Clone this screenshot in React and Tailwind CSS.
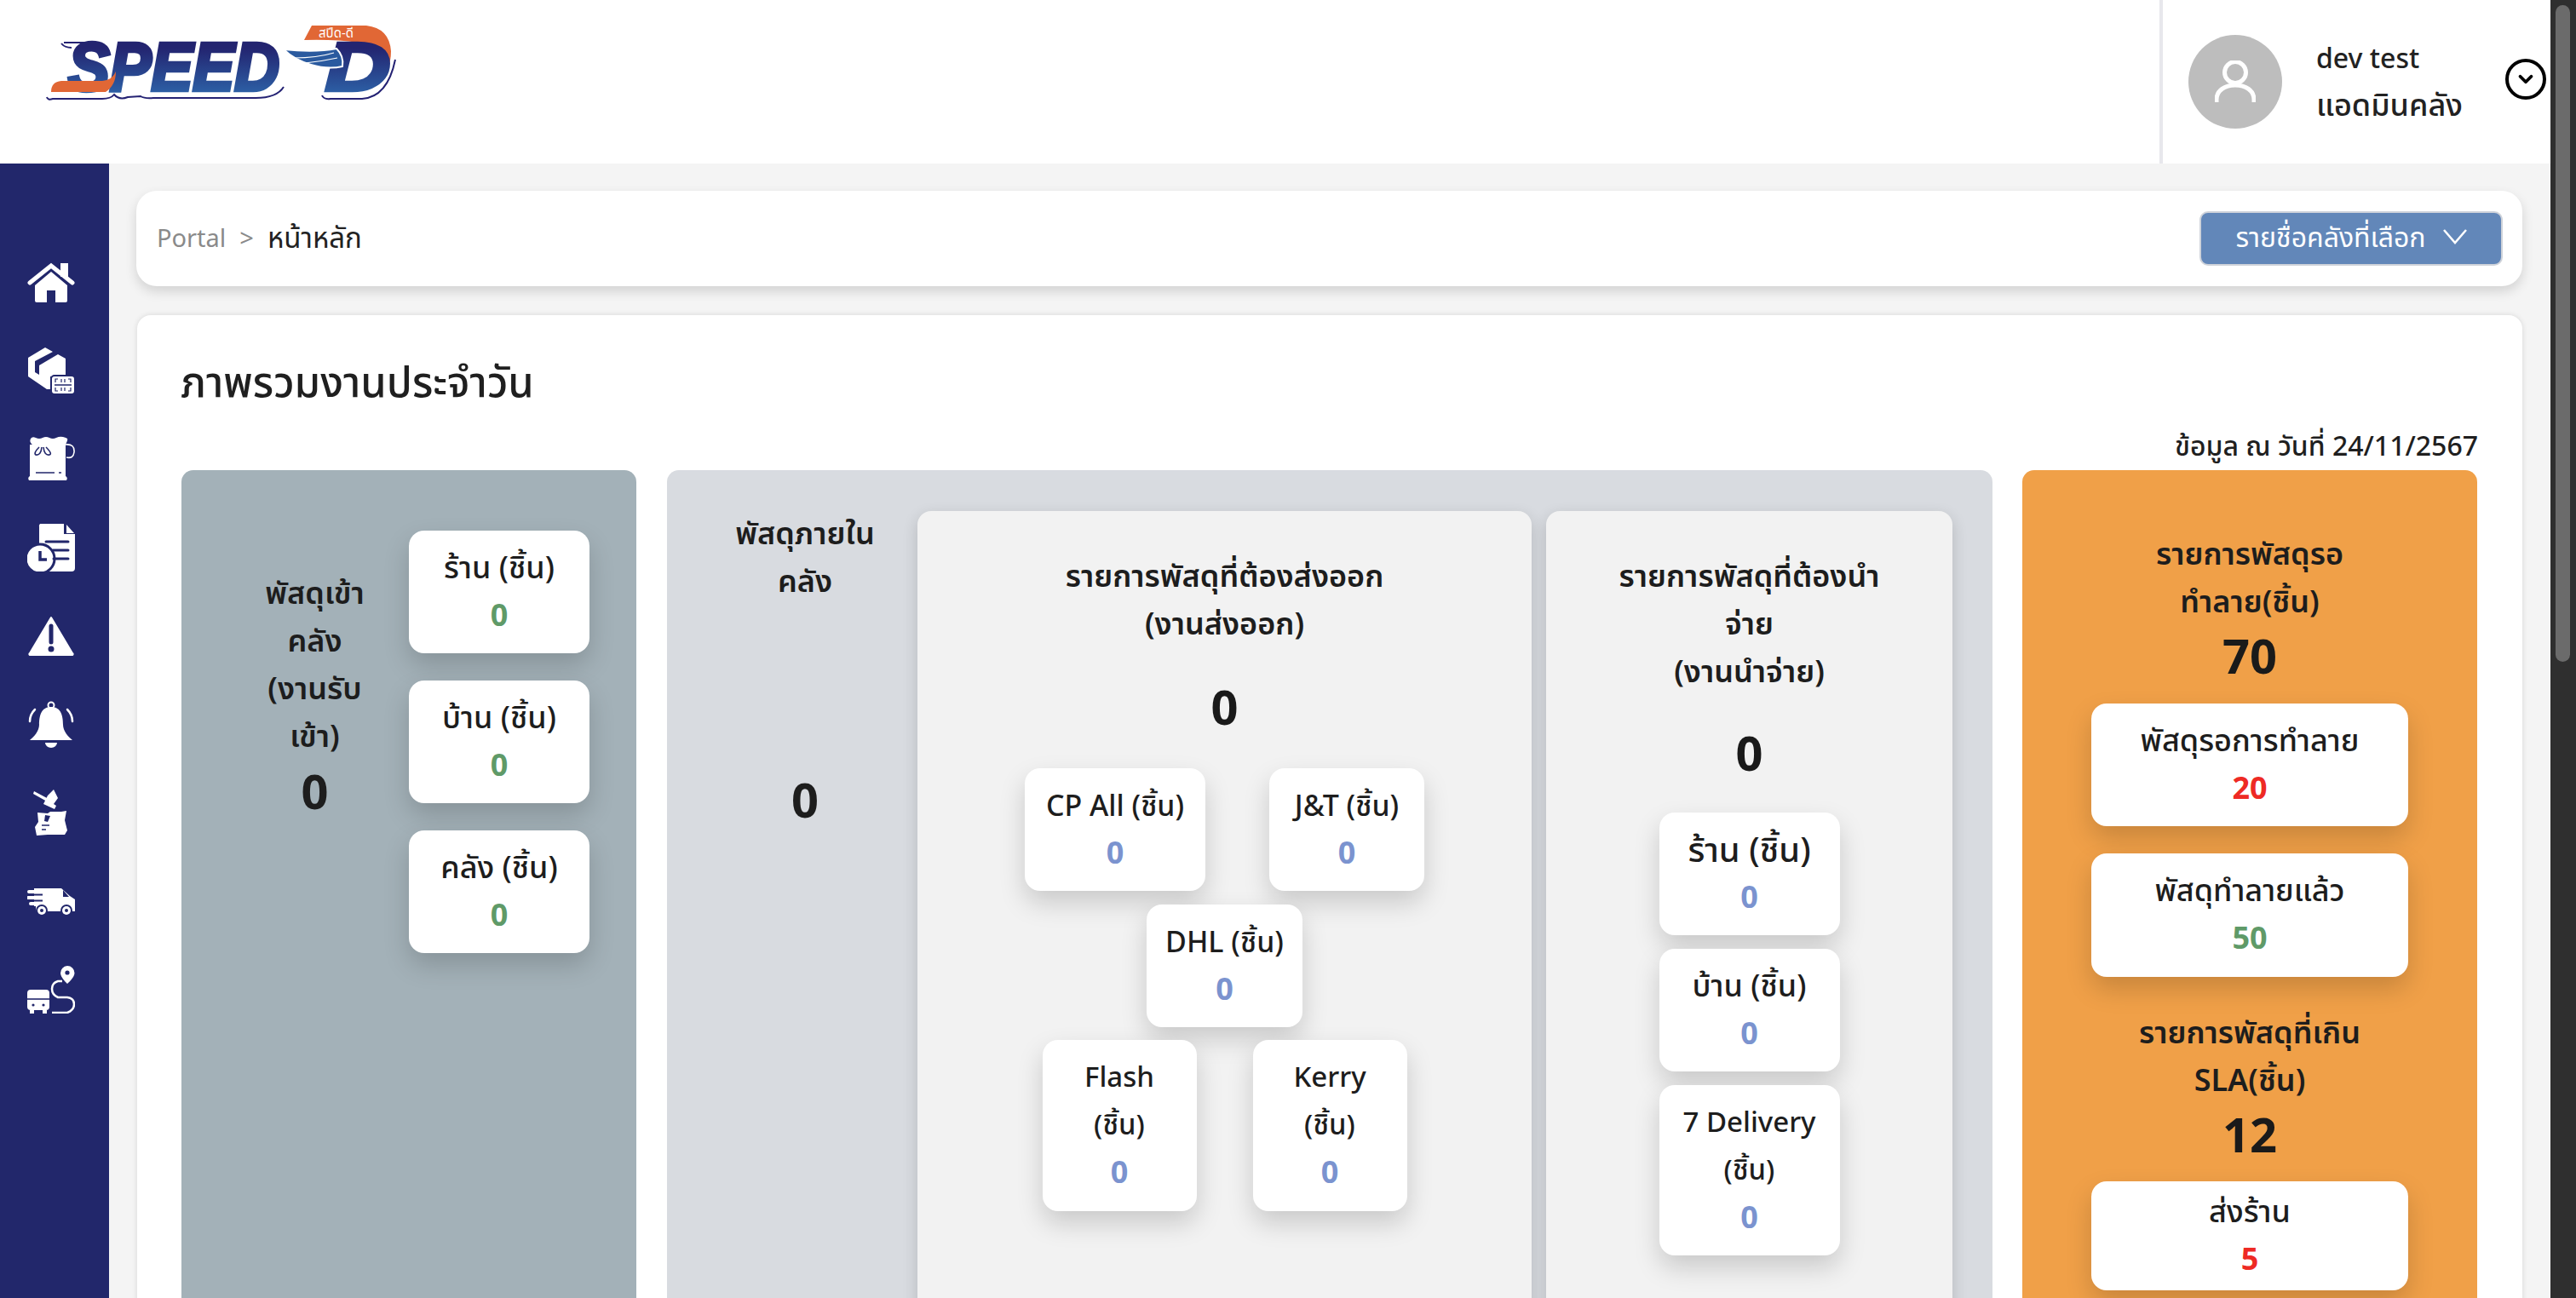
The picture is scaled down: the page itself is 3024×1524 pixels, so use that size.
import React from 'react';
import { ChevronDown } from 'lucide-react';

const thaiFont = "font-['Noto_Sans','Noto_Sans_Thai','Noto_Sans_CJK_SC',sans-serif]";

// กล่องตัวเลขสีขาว
const StatCard = ({ label, value, color, className = '', labelClass = 'text-[36px]' }) => (
    <div className={`bg-white rounded-[18px] shadow-[0_14px_30px_rgba(0,0,0,0.17)] text-center flex flex-col justify-center pb-[3px] ${className}`}>
        <div className={`leading-[56px] text-[#1d1d1d] font-medium ${labelClass}`}>{label}</div>
        <div className={`text-[36px] leading-[56px] font-bold ${color}`}>{value}</div>
    </div>
);

const HomeIcon = () => (
    <svg width="56" height="56" viewBox="0 0 56 56" fill="white">
        <rect x="39" y="5" width="9" height="16" />
        <path d="M28 15 47 31V49a2 2 0 0 1-2 2H33V37H23V51H11a2 2 0 0 1-2-2V31Z" />
        <path d="M3 28 28 8 53 28" fill="none" stroke="white" strokeWidth="5" strokeLinecap="round" />
    </svg>
);

const BoxScanIcon = () => (
    <svg width="56" height="56" viewBox="0 0 56 56" fill="white">
        <path d="M21 0 30 5 9 16V29L14 32V21L36 8 45 13V34H27V49H23L1 34V12Z" strokeLinejoin="round" />
        <rect x="28" y="33" width="28" height="22" rx="4" stroke="#22276b" strokeWidth="2" />
        <path d="M32 44H52" stroke="#22276b" strokeWidth="1.5" />
        <path d="M33 41V37H36M40 41V37M44 41V37M51 41V37H48M33 47V51H36M40 47V51M44 47V51M51 47V51H48" fill="none" stroke="#22276b" strokeWidth="1.2" />
    </svg>
);

const SackIcon = () => (
    <svg width="56" height="56" viewBox="0 0 56 56" fill="white">
        <path d="M4 4q2-3 6-1t8 0 8 0 8 0 8-1 5 2-2 7H6Q2 8 4 4Z" />
        <path d="M3 11H45V48q3 2 1 5H2q-2-3 1-5Z" />
        <path d="M14 14Q7 21 10 23 16 24 17 14M22 14Q30 22 26 23 20 24 19 14" fill="none" stroke="#22276b" strokeWidth="1.6" />
        <path d="M10 44H32M37 44H40" stroke="#22276b" strokeWidth="1.6" />
        <path d="M45 11Q56 10 55 20 54 28 46 26" fill="none" stroke="white" strokeWidth="1.6" />
    </svg>
);

const DocClockIcon = () => (
    <svg width="56" height="56" viewBox="0 0 56 56" fill="white">
        <path d="M15 0H43V12H56V52a4 4 0 0 1-4 4H18a4 4 0 0 1-4-4V4a4 4 0 0 1 1-4Z" />
        <path d="M46 1 55 11H46Z" />
        <circle cx="15" cy="41" r="17" stroke="#22276b" strokeWidth="3" />
        <path d="M15 32V42H23" fill="none" stroke="#22276b" strokeWidth="3.5" />
        <path d="M22 21H48M30 31H48M31 41H48" stroke="#22276b" strokeWidth="3" strokeLinecap="round" />
    </svg>
);

const WarnIcon = () => (
    <svg width="56" height="56" viewBox="0 0 56 56" fill="white">
        <path d="M28 6 53 48a1 1 0 0 1-1 2H4a1 1 0 0 1-1-2Z" stroke="white" strokeWidth="2" strokeLinejoin="round" />
        <path d="M28 16V35" stroke="#22276b" strokeWidth="5" strokeLinecap="round" />
        <circle cx="28" cy="43" r="3.5" fill="#22276b" />
    </svg>
);

const BellIcon = () => (
    <svg width="56" height="56" viewBox="0 0 56 56" fill="white">
        <circle cx="28" cy="5" r="3.5" fill="none" stroke="white" strokeWidth="2" />
        <path d="M28 7C16 7 14 18 14 28 14 35 8 42 3 46H53C48 42 42 35 42 28 42 18 40 7 28 7Z" />
        <path d="M21 49A7 6 0 0 0 35 49Z" />
        <path d="M9 10Q3 16 3 24M47 10Q53 16 53 24" fill="none" stroke="white" strokeWidth="2.5" strokeLinecap="round" />
    </svg>
);

const HammerBoxIcon = () => (
    <svg width="56" height="56" viewBox="0 0 56 56" fill="white">
        <path d="M8 2 25 11 23 14 7 5ZM24 7 31 0 36 10 31 17 34 19 32 23 19 17 21 13Z" />
        <path d="M12 27 24 28 27 26H40L46 25 44 36 47 48 44 53 24 53 11 54 9 44 13 38Z" />
        <path d="M21 30 27 31 24 38 20 37Z" fill="#22276b" />
        <path d="M17 42H26M17 47H22" stroke="#22276b" strokeWidth="1.6" />
    </svg>
);

const TruckIcon = () => (
    <svg width="56" height="56" viewBox="0 0 56 56" fill="white">
        <path d="M8 13H40L50 22 56 26V40H10V34H8Z" />
        <path d="M42 15V23H49Z" fill="#22276b" />
        <path d="M6 20.500H18M6 27.500H18" stroke="#22276b" strokeWidth="2" />
        <path d="M2 17H12M1 24H12M4 31H12" stroke="white" strokeWidth="4" strokeLinecap="round" />
        <circle cx="17" cy="39" r="7" fill="#22276b" /><circle cx="46" cy="39" r="7" fill="#22276b" />
        <circle cx="17" cy="39" r="5" /><circle cx="46" cy="39" r="5" />
        <circle cx="17" cy="39" r="2" fill="#22276b" /><circle cx="46" cy="39" r="2" fill="#22276b" />
    </svg>
);

const RouteIcon = () => (
    <svg width="56" height="56" viewBox="0 0 56 56" fill="white">
        <path d="M47 0a8.500 8.500 0 0 1 8.500 8.500C55.500 14 47 21 47 21S39 14 39 8.500A8.500 8.500 0 0 1 47 0Z" />
        <circle cx="47" cy="8" r="2.600" fill="#22276b" />
        <path d="M41 18H36Q29 20 29 27T36 37H47Q55 38 55 45T47 55H29" fill="none" stroke="white" strokeWidth="2.500" />
        <rect x="0" y="28" width="26" height="24" rx="4" />
        <path d="M0 39H26" stroke="#22276b" strokeWidth="1.600" />
        <circle cx="7" cy="46" r="1.600" fill="#22276b" /><circle cx="19" cy="46" r="1.600" fill="#22276b" />
        <path d="M3 52h5v4H3ZM18 52h5v4h-5Z" />
    </svg>
);

// โลโก้ SPEED-D วาดใหม่ด้วย svg แต่ตัวอักษรยังเป็น text จริง
const Logo = () => (
    <svg width="420" height="100" viewBox="50 24 420 100" className="block">
        <defs>
            <linearGradient id="logoBlue" x1="0" y1="0" x2="0" y2="1">
                <stop offset="0.25" stopColor="#232470" />
                <stop offset="1" stopColor="#2f6fb3" />
            </linearGradient>
        </defs>
        <path d="M72 51Q76 56 84 56M75 50H110" fill="none" stroke="#242273" strokeWidth="2" />
        <path d="M55 114Q56 118 62 116H120Q130 116 134 111 140 118 150 114L165 113Q170 116 180 115H300Q325 115 333 102M378 112Q380 117 388 116H425Q455 114 464 70" fill="none" stroke="#242273" strokeWidth="2" />
        <path d="M366 30H430Q457 33 459 60 459 72 455 80 450 56 420 50 395 46 357 47Z" fill="#e16735" />
        <text x="374" y="44" fontFamily="Noto Sans, Noto Sans Thai, sans-serif" fontSize="15" fill="white">สปีด-ดี</text>
        <text x="80" y="106" fontFamily="Liberation Sans" fontWeight="700" fontStyle="italic" fontSize="80" textLength="248" lengthAdjust="spacingAndGlyphs" fill="url(#logoBlue)" stroke="url(#logoBlue)" strokeWidth="4.500">SPEED</text>
        <path d="M60 108Q60 96 72 95H120Q132 94 136 84 136 100 124 108Z" fill="#e16735" />
        <text x="382" y="106" fontFamily="Liberation Sans" fontWeight="700" fontStyle="italic" fontSize="80" textLength="76" lengthAdjust="spacingAndGlyphs" fill="url(#logoBlue)" stroke="url(#logoBlue)" strokeWidth="4.500">D</text>
        <path d="M333 58Q370 62 395 57 404 66 402 78 385 82 365 76 345 70 333 58Z" fill="#2a5a9f" stroke="white" strokeWidth="2" />
        <path d="M345 68Q372 68 392 62M358 74Q378 72 396 68" fill="none" stroke="white" strokeWidth="1.200" />
    </svg>
);

const Sidebar = () => (
    <aside className="w-[128px] shrink-0 bg-[#22276b] pt-[88px] pl-[32px]">
        {[HomeIcon, BoxScanIcon, SackIcon, DocClockIcon, WarnIcon, BellIcon, HammerBoxIcon, TruckIcon, RouteIcon].map((Icon, idx) => (
            <div key={idx} className="h-[103.800px] flex items-center"><Icon /></div>
        ))}
    </aside>
);

const App = () => {
    return (
        <div className={`h-screen overflow-hidden flex bg-[#f4f4f4] ${thaiFont}`}>
            <div className="flex-1 min-w-0 flex flex-col">
                <header className="h-[192px] shrink-0 bg-white flex items-start justify-between">
                    <div className="pl-[50px] pt-[24px]"><Logo /></div>
                    <div className="w-[459px] h-full border-l-4 border-[#e7e7ec] flex items-center pl-[30px]">
                        <div className="w-[110px] h-[110px] rounded-full bg-[#bdbdbd] flex items-center justify-center">
                            <svg width="48" height="50" viewBox="0 0 48 50" fill="none" stroke="white" strokeWidth="5">
                                <circle cx="24" cy="14" r="12.500" />
                                <path d="M2 49V46C2 35 12 29 24 29S46 35 46 46V49" />
                            </svg>
                        </div>
                        <div className="ml-[40px] text-[#222] font-medium w-[222px] pb-[2px]">
                            <div className="text-[32px] leading-[55px]">dev test</div>
                            <div className="text-[36px] leading-[55px]">แอดมินคลัง</div>
                        </div>
                        <div className="w-[48px] h-[48px] rounded-full border-[4px] border-black flex items-center justify-center -mt-[6px]">
                            <ChevronDown size={26} strokeWidth={3.500} color="black" />
                        </div>
                    </div>
                </header>
                <div className="flex-1 flex min-h-0">
                    <Sidebar />
                    <main className="flex-1 min-w-0 pt-[32px] pl-[32px] pr-[33px]">
                        <div className="h-[112px] bg-white rounded-[24px] shadow-[0_6px_14px_rgba(0,0,0,0.14)] flex items-center justify-between pl-[24px] pr-[23px]">
                            <div className="flex items-center gap-[16px] pb-[2px]">
                                <span className="text-[29px] text-[#8a8a8a]">Portal</span>
                                <span className="text-[29px] text-[#8a8a8a]">&gt;</span>
                                <span className="text-[33px] text-[#222]">หน้าหลัก</span>
                            </div>
                            <button className="w-[356px] h-[64px] bg-[#6287b9] border-2 border-[#cfd3da] rounded-[10px] text-white text-[32px] flex items-center justify-center gap-[20px] pb-[4px]">
                                รายชื่อคลังที่เลือก
                                <svg width="28" height="18" viewBox="0 0 28 18" fill="none" stroke="white" strokeWidth="2.500"><path d="M1 1 14 16 27 1" /></svg>
                            </button>
                        </div>
                        <div className="mt-[34px] ml-[1px] bg-white rounded-t-[16px] shadow-[0_0_6px_rgba(0,0,0,0.12)] pl-[52px] pr-[52px] h-[1200px]">
                            <h1 className="pt-[44px] -ml-[1px] text-[49px] leading-[66px] font-medium text-[#1f1f1f]">ภาพรวมงานประจำวัน</h1>
                            <div className="text-right text-[32px] leading-[42px] text-[#1f1f1f] mt-[22px] font-medium">ข้อมูล ณ วันที่ 24/11/2567</div>
                            <div className="flex gap-[36px] mt-[8px] h-[1000px]">
                                {/* งานรับเข้า */}
                                <section className="w-[534px] shrink-0 bg-[#a3b1b8] rounded-[14px] flex items-start pt-[71px]">
                                    <div className="w-[266px] pl-[57px] pr-[10px] pt-[45px] text-center text-[36px] leading-[56px] font-semibold text-[#1d1d1d] shrink-0">
                                        <div>พัสดุเข้า<br />คลัง<br />(งานรับ<br />เข้า)</div>
                                        <div className="text-[56px] leading-[72px] font-bold">0</div>
                                    </div>
                                    <div className="ml-[1px] flex flex-col gap-[32px]">
                                        <StatCard label="ร้าน (ชิ้น)" value="0" color="text-[#5f9a68]" className="w-[212px] h-[144px]" />
                                        <StatCard label="บ้าน (ชิ้น)" value="0" color="text-[#5f9a68]" className="w-[212px] h-[144px]" />
                                        <StatCard label="คลัง (ชิ้น)" value="0" color="text-[#5f9a68]" className="w-[212px] h-[144px]" />
                                    </div>
                                </section>
                                {/* พัสดุภายในคลัง */}
                                <section className="w-[1556px] shrink-0 bg-[#d8dbe0] rounded-[14px] flex pt-[48px] pl-[47px] gap-[17px]">
                                    <div className="w-[230px] shrink-0 text-center text-[36px] leading-[56px] font-semibold text-[#1d1d1d]">
                                        <div className="-mt-[2px] px-[30px]">พัสดุภายในคลัง</div>
                                        <div className="mt-[193px] text-[56px] leading-[70px] font-bold">0</div>
                                    </div>
                                    <div className="w-[721px] shrink-0 h-[952px] bg-[#f2f2f2] rounded-[16px] shadow-[0_6px_18px_rgba(0,0,0,0.16)] pt-[48px] text-center">
                                        <div className="text-[36px] leading-[56px] font-semibold text-[#1d1d1d]">รายการพัสดุที่ต้องส่งออก<br />(งานส่งออก)</div>
                                        <div className="mt-[34px] text-[56px] leading-[70px] font-bold text-[#1a1a1a]">0</div>
                                        <div className="mt-[38px] flex justify-center gap-[75px]">
                                            <StatCard label="CP All (ชิ้น)" labelClass="text-[34px]" value="0" color="text-[#7b93cf]" className="w-[212px] h-[144px]" />
                                            <StatCard label="J&T (ชิ้น)" labelClass="text-[34px]" value="0" color="text-[#7b93cf]" className="w-[182px] h-[144px]" />
                                        </div>
                                        <div className="mt-[16px] flex justify-center">
                                            <StatCard label="DHL (ชิ้น)" labelClass="text-[34px]" value="0" color="text-[#7b93cf]" className="w-[183px] h-[144px]" />
                                        </div>
                                        <div className="mt-[15px] flex justify-center gap-[66px]">
                                            <StatCard label={<>Flash<br />(ชิ้น)</>} labelClass="text-[33px]" value="0" color="text-[#7b93cf]" className="w-[181px] h-[201px]" />
                                            <StatCard label={<>Kerry<br />(ชิ้น)</>} labelClass="text-[33px]" value="0" color="text-[#7b93cf]" className="w-[181px] h-[201px]" />
                                        </div>
                                    </div>
                                    <div className="w-[477px] shrink-0 h-[952px] bg-[#f2f2f2] rounded-[16px] shadow-[0_6px_18px_rgba(0,0,0,0.16)] pt-[48px] text-center">
                                        <div className="px-[60px] text-[36px] leading-[56px] font-semibold text-[#1d1d1d]">รายการพัสดุที่ต้องนำจ่าย<br />(งานนำจ่าย)</div>
                                        <div className="mt-[32px] text-[56px] leading-[70px] font-bold text-[#1a1a1a]">0</div>
                                        <div className="mt-[36px] flex flex-col items-center gap-[16px]">
                                            <StatCard label="ร้าน (ชิ้น)" labelClass="text-[40px]" value="0" color="text-[#7b93cf]" className="w-[212px] h-[144px]" />
                                            <StatCard label="บ้าน (ชิ้น)" value="0" color="text-[#7b93cf]" className="w-[212px] h-[144px]" />
                                            <StatCard label={<>7 Delivery<br />(ชิ้น)</>} labelClass="text-[33px]" value="0" color="text-[#7b93cf]" className="w-[212px] h-[200px]" />
                                        </div>
                                    </div>
                                </section>
                                {/* รอทำลาย */}
                                <section className="w-[534px] shrink-0 -ml-[1px] bg-[#f0a048] rounded-[14px] pt-[70px] text-center px-[81px]">
                                    <div className="text-[36px] leading-[56px] font-semibold text-[#1d1d1d] px-[20px]">รายการพัสดุรอทำลาย(ชิ้น)</div>
                                    <div className="text-[56px] leading-[70px] font-bold text-[#1a1a1a]">70</div>
                                    <StatCard label="พัสดุรอการทำลาย" value="20" color="text-[#ee2a24]" className="mt-[22px] h-[144px]" />
                                    <StatCard label="พัสดุทำลายแล้ว" value="50" color="text-[#5f9a68]" className="mt-[32px] h-[145px]" />
                                    <div className="mt-[37px] text-[36px] leading-[56px] font-semibold text-[#1d1d1d]">รายการพัสดุที่เกิน SLA(ชิ้น)</div>
                                    <div className="text-[56px] leading-[70px] font-bold text-[#1a1a1a]">12</div>
                                    <StatCard label="ส่งร้าน" value="5" color="text-[#ee2a24]" className="mt-[21px] h-[128px]" />
                                </section>
                            </div>
                        </div>
                    </main>
                </div>
            </div>
            <div className="w-[30px] shrink-0 bg-[#2f2f2f] pt-[6px] pl-[6px]">
                <div className="w-[17px] h-[771px] rounded-full bg-[#6b6b6b]" />
            </div>
        </div>
    );
};

export default App;
